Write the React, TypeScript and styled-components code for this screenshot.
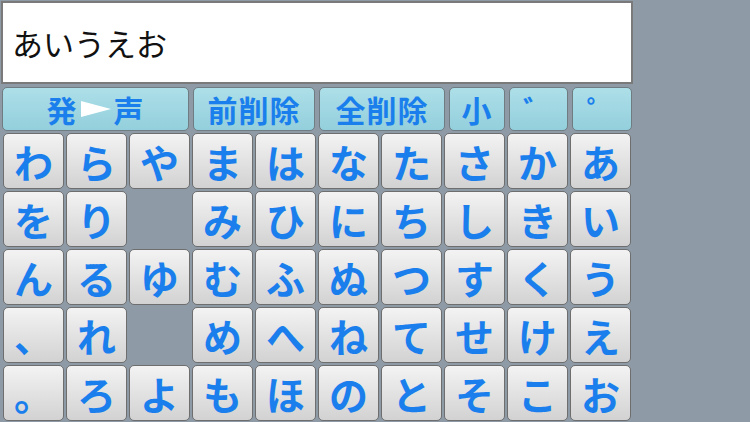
import React from 'react';
import styled, { createGlobalStyle } from 'styled-components';

const GlobalStyle = createGlobalStyle`
  body {
    margin: 0;
    background: #8e9aa6;
    font-family: "Noto Sans CJK JP", "Noto Sans", sans-serif;
  }
`;

const Screen = styled.div`
  width: 750px;
  height: 422px;
  padding: 1px 0 0 1px;
  box-sizing: border-box;
  overflow: hidden;
`;

const InputBox = styled.div`
  width: 632px;
  height: 83px;
  box-sizing: border-box;
  border: 2px solid #7a7a7a;
  background: #ffffff;
  display: flex;
  align-items: center;
  padding-left: 9px;
  font-size: 31px;
  color: #111;
`;

const FuncRow = styled.div`
  display: flex;
  gap: 4px;
  margin-top: 3px;
  padding-left: 1px;
  height: 44px;
`;

const FuncKey = styled.div<{ $w: number }>`
  width: ${p => p.$w}px;
  box-sizing: border-box;
  border: 1px solid #6f7d82;
  border-radius: 5px;
  background: linear-gradient(#addfe8, #93cfdc);
  color: #1a7fec;
  font-weight: 700;
  font-size: 30px;
  letter-spacing: 1px;
  display: flex;
  align-items: center;
  justify-content: center;
  gap: 3px;
  line-height: 1;
`;

const Grid = styled.div`
  display: grid;
  grid-template-columns: repeat(10, 61px);
  grid-template-rows: repeat(5, 56px);
  gap: 2px;
  margin-top: 2px;
  padding-left: 2px;
`;

const Key = styled.div`
  box-sizing: border-box;
  border: 1px solid #6e6e6e;
  border-radius: 5px;
  background: linear-gradient(#f3f3f3, #d2d2d2);
  color: #1a7fec;
  font-weight: 700;
  font-size: 39px;
  display: flex;
  align-items: center;
  justify-content: center;
  line-height: 1;
`;

const Gap = styled.div``;

const Arrow = () => (
  <svg width="30" height="16" viewBox="0 0 30 16">
    <polygon points="0,0 30,8 0,16" fill="#ffffff" />
  </svg>
);

const rows = [
  'わらやまはなたさかあ',
  'をり　みひにちしきい',
  'んるゆむふぬつすくう',
  '、れ　めへねてせけえ',
  '。ろよもほのとそこお',
];

const App = () => (
  <Screen>
    <GlobalStyle />
    <InputBox>あいうえお</InputBox>
    <FuncRow>
      <FuncKey $w={187}>
        <span>発</span>
        <Arrow />
        <span>声</span>
      </FuncKey>
      <FuncKey $w={122}>前削除</FuncKey>
      <FuncKey $w={126}>全削除</FuncKey>
      <FuncKey $w={56}>小</FuncKey>
      <FuncKey $w={59}>゛</FuncKey>
      <FuncKey $w={60}>゜</FuncKey>
    </FuncRow>
    <Grid>
      {rows.flatMap((row, r) =>
        Array.from(row).map((ch, c) =>
          ch === '　' ? <Gap key={`${r}-${c}`} /> : <Key key={`${r}-${c}`}>{ch}</Key>
        )
      )}
    </Grid>
  </Screen>
);

export default App;
